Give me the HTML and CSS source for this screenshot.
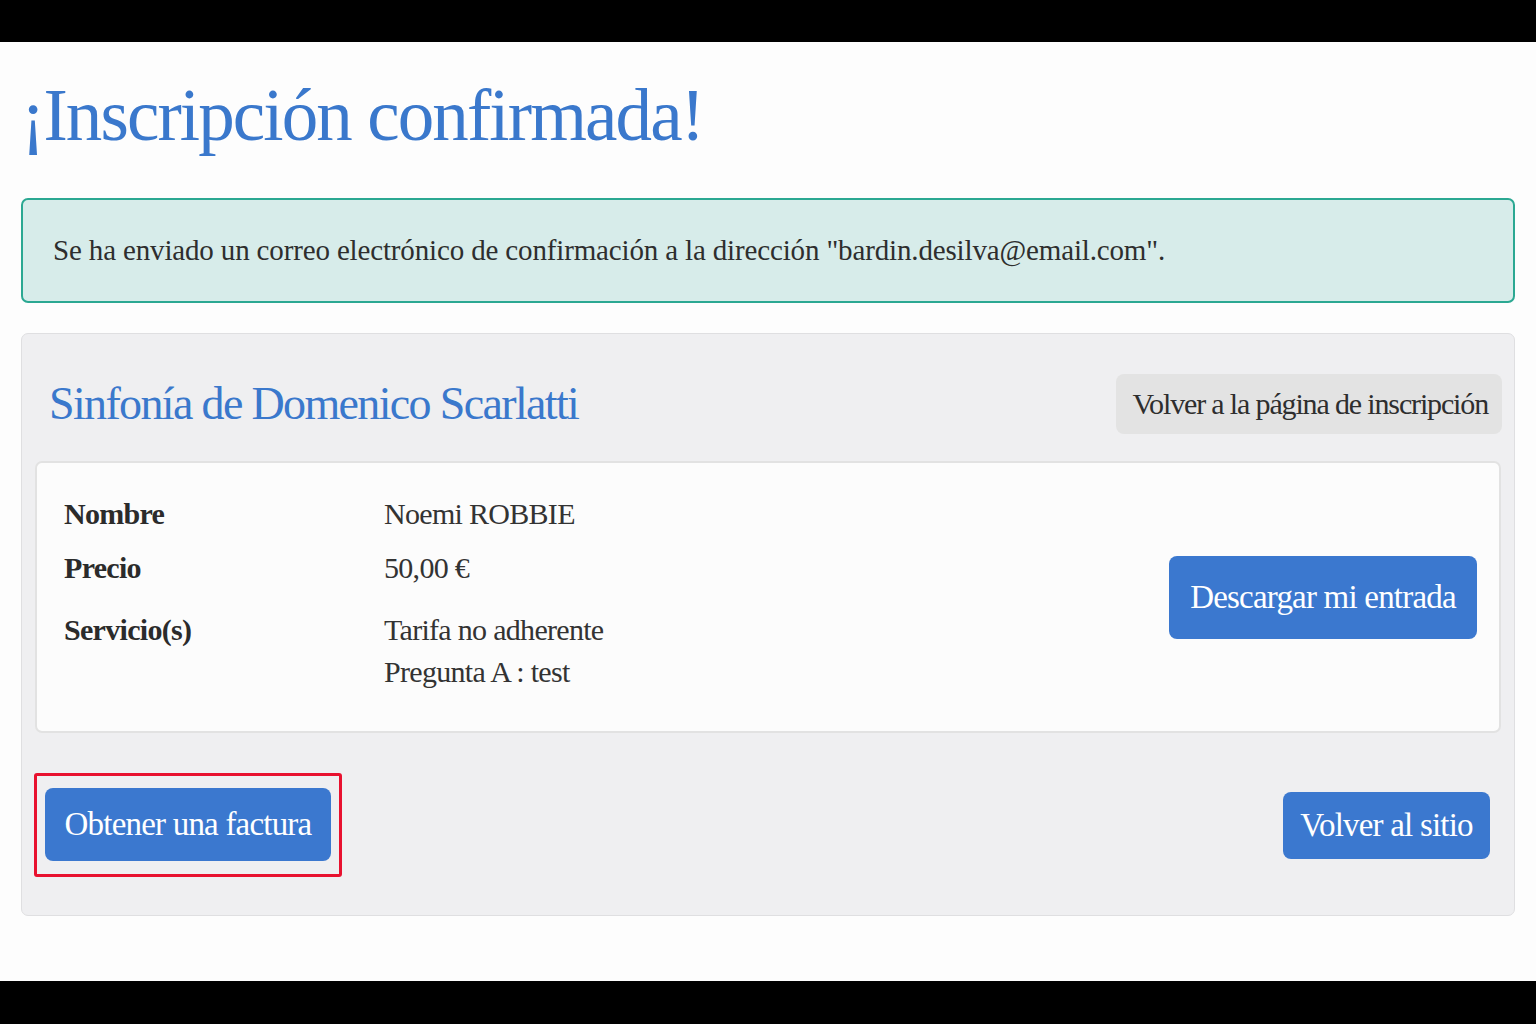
FILE: index.html
```html
<!DOCTYPE html>
<html lang="es">
<head>
<meta charset="utf-8">
<title>¡Inscripción confirmada!</title>
<link rel="stylesheet" href="styles.css">
</head>
<body>
<main class="page">
  <h1 class="page-title">¡Inscripción confirmada!</h1>

  <div class="alert">Se ha enviado un correo electrónico de confirmación a la dirección "bardin.desilva@email.com".</div>

  <section class="card">
    <header class="card-head">
      <h2 class="event-title">Sinfonía de Domenico Scarlatti</h2>
      <a class="btn btn-light" href="#">Volver a la página de inscripción</a>
    </header>

    <div class="ticket">
      <dl class="details">
        <dt>Nombre</dt>
        <dd>Noemi ROBBIE</dd>
        <dt>Precio</dt>
        <dd>50,00 €</dd>
        <dt class="services">Servicio(s)</dt>
        <dd class="services">Tarifa no adherente<br>Pregunta A : test</dd>
      </dl>
      <a class="btn btn-primary btn-big" href="#">Descargar mi entrada</a>
    </div>

    <footer class="card-foot">
      <span class="highlight"><a class="btn btn-primary btn-invoice" href="#">Obtener una factura</a></span>
      <a class="btn btn-primary btn-back" href="#">Volver al sitio</a>
    </footer>
  </section>
</main>
</body>
</html>
```

FILE: styles.css
```css
html, body {
  margin: 0;
  padding: 0;
  background: #000;
}

body {
  font-family: "Liberation Serif", "Times New Roman", serif;
  color: #2b2b2b;
}

.page {
  margin-top: 42px;
  height: 939px;
  box-sizing: border-box;
  background: #fdfdfd;
  padding: 0 21px;
  overflow: hidden;
}

.page-title {
  margin: 0;
  padding-top: 29px;
  height: 156px;
  box-sizing: border-box;
  font-size: 73px;
  font-weight: 400;
  line-height: 90px;
  color: #3a78cc;
  letter-spacing: -1.9px;
}

.alert {
  height: 105px;
  box-sizing: border-box;
  border: 2px solid #2ba892;
  border-radius: 7px;
  background: #d7ecea;
  padding: 0 30px;
  display: flex;
  align-items: center;
  font-size: 29px;
  letter-spacing: -0.15px;
  color: #2e2e2e;
}

.card {
  margin-top: 30px;
  height: 583px;
  box-sizing: border-box;
  border: 1px solid #dfdfe1;
  border-radius: 7px;
  background: #efeff1;
  padding: 0 13px;
}

.card-head {
  display: flex;
  align-items: flex-start;
  justify-content: space-between;
  padding-top: 40px;
  height: 127px;
  box-sizing: border-box;
}

.event-title {
  margin: 0;
  padding-left: 14px;
  font-size: 46px;
  font-weight: 400;
  line-height: 60px;
  color: #3a78cc;
  letter-spacing: -1.65px;
}

.btn {
  display: inline-flex;
  align-items: center;
  justify-content: center;
  box-sizing: border-box;
  text-decoration: none;
  border-radius: 8px;
  letter-spacing: -0.8px;
}

.btn-light {
  height: 60px;
  padding: 0 14px 0 16px;
  margin-right: -1px;
  background: #e3e3e3;
  color: #2e2e2e;
  font-size: 30px;
  letter-spacing: -1.15px;
}

.btn-primary {
  background: #3b78cf;
  color: #fff;
  font-size: 33px;
}

.ticket {
  height: 272px;
  box-sizing: border-box;
  border: 2px solid #e2e2e2;
  border-radius: 7px;
  background: #fcfcfc;
  display: flex;
  align-items: center;
  justify-content: space-between;
  padding: 0 22px 0 27px;
}

.details {
  margin: 0;
  align-self: flex-start;
  padding-top: 30px;
  display: grid;
  grid-template-columns: 320px auto;
  row-gap: 12px;
  font-size: 30px;
  line-height: 42px;
  letter-spacing: -0.7px;
}

.details dt {
  font-weight: 700;
  color: #2b2b2b;
}

.details dd {
  margin: 0;
  color: #333;
}

.details .services {
  margin-top: 8px;
}

.btn-big {
  width: 308px;
  height: 83px;
}

.card-foot {
  display: flex;
  align-items: center;
  justify-content: space-between;
  padding-top: 40px;
}

.highlight {
  display: inline-flex;
  border: 3px solid #e8112f;
  border-radius: 3px;
  padding: 12px 8px 13px 8px;
  margin-left: -1px;
}

.btn-invoice {
  width: 286px;
  height: 73px;
}

.btn-back {
  width: 207px;
  height: 67px;
  margin-right: 11px;
}
```
